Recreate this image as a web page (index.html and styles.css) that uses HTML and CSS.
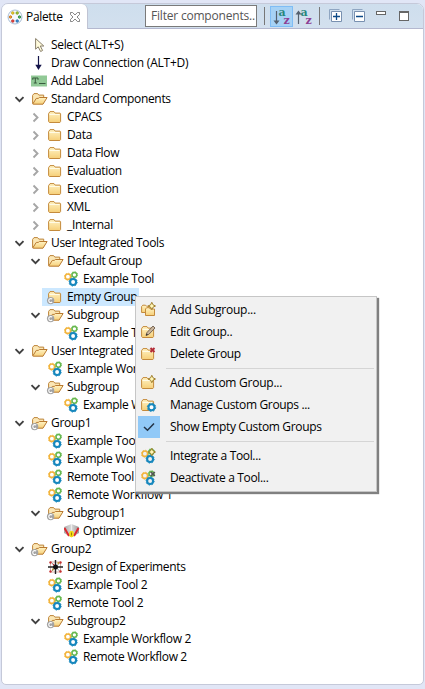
FILE: index.html
```html
<!DOCTYPE html>
<html lang="en">
<head>
<meta charset="utf-8">
<title>Palette</title>
<link rel="stylesheet" href="styles.css">
</head>
<body>
<svg class="defs" aria-hidden="true">
  <defs>
    <linearGradient id="fold" x1="0" y1="0" x2="0" y2="1"><stop offset="0" stop-color="#fff3c4"/><stop offset="1" stop-color="#f6cf78"/></linearGradient>
    <linearGradient id="steel" x1="0" y1="0" x2="1" y2="0"><stop offset="0" stop-color="#aaa"/><stop offset=".5" stop-color="#dcdcdc"/><stop offset="1" stop-color="#999"/></linearGradient>
    <symbol id="down" viewBox="0 0 16 16"><path d="M3.500 6.200l4 4 4-4" fill="none" stroke="#404040" stroke-width="1.900"/></symbol>
    <symbol id="right" viewBox="0 0 16 16"><path d="M5.500 4.500l4 4-4 4" fill="none" stroke="#a6a6a6" stroke-width="1.900"/></symbol>
    <symbol id="closed" viewBox="0 0 16 16"><path d="M.6 12.500V4.600L2 2.600h4l1.200 1.500h4.900l.5.600v7.800l-.7 1H1.400z" fill="url(#fold)" stroke="#c48a3c"/><path d="M1.500 5.500h10" stroke="#fffbe6"/></symbol>
    <symbol id="open" viewBox="0 0 16 16"><path d="M.6 12.600V4.400L2 2.600h3.600l1.200 1.500h4.900v3" fill="#fbe7b5" stroke="#bd853b"/><path d="M.7 13l3.600-5.600h2l1-.9h7.800L11 13.200H1.200z" fill="url(#fold)" stroke="#b97a31"/></symbol>
    <symbol id="mark" viewBox="0 0 16 16" overflow="visible"><circle cx="2.600" cy="11.600" r="3.700" fill="#a3a3a3"/><path d="M4.200 10.200a2 2 0 1 0 0 2.800" fill="none" stroke="#fff" stroke-width="1.100"/></symbol>
    <symbol id="openc" viewBox="0 0 16 16" overflow="visible"><use href="#open"/><use href="#mark"/></symbol>
    <symbol id="closedc" viewBox="0 0 16 16" overflow="visible"><use href="#closed"/><use href="#mark"/></symbol>
    <symbol id="gears" viewBox="0 0 16 16"><g fill="none"><circle cx="3.900" cy="5.700" r="2.700" stroke="#f2b43c" stroke-width="1.600"/><circle cx="3.900" cy="5.700" r="3.500" stroke="#f2b43c" stroke-dasharray="1.100 1.650"/><circle cx="10.400" cy="3.800" r="2.400" stroke="#67b84f" stroke-width="1.500"/><circle cx="10.400" cy="3.800" r="3.200" stroke="#67b84f" stroke-dasharray="1 1.510"/><circle cx="9.100" cy="11" r="3" stroke="#1687bd" stroke-width="2.100"/><circle cx="9.100" cy="11" r="4.100" stroke="#1687bd" stroke-dasharray="1.300 1.920"/></g></symbol>
    <symbol id="cursor" viewBox="0 0 16 16"><path d="M3.600 1.500v10.700l2.600-2.400 2.400 4.700 2-1-2.300-4.500h3.500z" fill="#fffbdc" stroke="#8a806c"/></symbol>
    <symbol id="arrow" viewBox="0 0 16 16"><path d="M6.500 1v10" stroke="#15154a" stroke-width="1.200"/><path d="M3.300 9.700h6.400L6.500 15z" fill="#15154a"/></symbol>
    <symbol id="label" viewBox="0 0 16 16" overflow="visible"><path d="M-1 2.500h16v11H-1z" fill="#91c996"/><path d="M.5 5h5.500v1.800M3.300 5v5M1.800 10h3M.8 5v1.800M7 10.500h6.500" fill="none" stroke="#385b3d"/></symbol>
    <symbol id="opt" viewBox="0 0 16 16"><path d="M0 4l7.500-3L15 4v6l-7.500 4.500L0 10z" fill="url(#steel)"/><path d="M7.500 1v8" stroke="#f2f2f2" stroke-width=".8"/><path d="M.5 5l4.500 8M14.500 5L10 13" fill="none" stroke="#dd2930" stroke-width="2"/><ellipse cx="7.500" cy="11" rx="2.300" ry="3.200" fill="#f4dc12"/><path d="M7.500 9.500v3" stroke="#9b8308"/></symbol>
    <symbol id="doe" viewBox="0 0 16 16"><path d="M2.500 3h10v10h-10z" fill="none" stroke="#c9a08f" stroke-width=".8"/><path d="M4 4l7.500 8M11.500 4L4 12" stroke="#777" stroke-width=".8"/><path d="M7.500 1v14M0 8h15" stroke="#222" stroke-width="1.400"/><circle cx="7.500" cy="8" r="2.500" fill="#111"/><g fill="#c53131"><circle cx="2.500" cy="3.500" r="1.200"/><circle cx="12.500" cy="3.500" r="1.200"/><circle cx="2.500" cy="12.500" r="1.200"/><circle cx="12.500" cy="12.500" r="1.200"/><circle cx="5.500" cy="5.500" r=".8"/></g><path d="M4 9.500h1.500v2H4zM9.500 3H11v2H9.500z" fill="#c09a36"/></symbol>
    <symbol id="star" viewBox="0 0 16 16"><path d="M10.800.300l1.200 2.500 2.500 1.200L12 5.200l-1.200 2.500-1.200-2.500L7.100 4l2.500-1.200z" fill="#fff7b8" stroke="#96721d" stroke-width=".9"/></symbol>
    <symbol id="addsub" viewBox="0 0 16 16"><path d="M.6 10.500V4.500l1.200-1.300h2.700l1 1H9v6.300z" fill="url(#fold)" stroke="#c48a3c"/><path d="M4.500 13.500V7l1.200-1.300h2.600l1 1.300h4.200v6.500z" fill="url(#fold)" stroke="#c48a3c"/><use href="#star"/></symbol>
    <symbol id="edit" viewBox="0 0 16 16"><use href="#closed"/><path d="M5 11.500l1-3L12 2l2 2-6.200 6.400z" fill="#c9b59c" stroke="#6c5b4c" stroke-width=".9"/><path d="M5 11.500l.7-2 1.200 1.200z" fill="#222"/></symbol>
    <symbol id="del" viewBox="0 0 16 16"><use href="#closed"/><path d="M9.500 2l4 4m0-4l-4 4" stroke="#b32b37" stroke-width="1.900"/></symbol>
    <symbol id="addgrp" viewBox="0 0 16 16"><use href="#closed"/><use href="#star"/></symbol>
    <symbol id="manage" viewBox="0 0 16 16"><use href="#closed"/><circle cx="10.500" cy="10.300" r="3" fill="#fff" stroke="#1687bd" stroke-width="2"/><circle cx="10.500" cy="10.300" r="4.200" fill="none" stroke="#1687bd" stroke-dasharray="1.600 1.700"/></symbol>
    <symbol id="check" viewBox="0 0 16 16"><path d="M3 8l3.500 3.300L13 4.500" fill="none" stroke="#243447" stroke-width="1.500"/></symbol>
    <symbol id="integrate" viewBox="0 0 16 16"><use href="#gears"/><use href="#star"/></symbol>
    <symbol id="deact" viewBox="0 0 16 16"><use href="#gears"/><path d="M9.800 2l4 4m0-4l-4 4" stroke="#555" stroke-width="1.700"/></symbol>
  </defs>
</svg>
<main class="panel">
  <header class="bar">
    <div class="tab">
      <svg class="ico" viewBox="0 0 16 16"><circle cx="8" cy="8" r="7" fill="#f4f8fd" stroke="#a9bdd4"/><g stroke-width=".9"><circle cx="5.800" cy="4" r="1.200" fill="#ffe23a" stroke="#b79b13"/><circle cx="10.200" cy="4" r="1.200" fill="#b9d839" stroke="#6f9620"/><circle cx="3.500" cy="8" r="1.200" fill="#f9a63a" stroke="#c56d15"/><circle cx="12.500" cy="8" r="1.200" fill="#55b567" stroke="#238540"/><circle cx="5.800" cy="12" r="1.200" fill="#ef5a50" stroke="#bd2727"/><circle cx="10.200" cy="12" r="1.200" fill="#4b9de0" stroke="#1f66ac"/></g></svg>
      <span class="title">Palette</span>
      <svg class="close" viewBox="0 0 11 11"><path d="M.5.500h2.300L5.500 3.300 8.200.500h2.300v2.300L7.700 5.500l2.800 2.700v2.300H8.200L5.500 7.700l-2.700 2.800H.500V8.200l2.800-2.700L.500 2.800z" fill="#fff" stroke="#6b6b6b" stroke-width=".9"/></svg>
    </div>
    <div class="tools">
      <div class="filter">Filter components..</div>
      <i class="vsep"></i>
      <div class="sort on"><svg viewBox="0 0 21 19"><path d="M5.500 4v11" stroke="#55606e" stroke-width="1.200"/><path d="M2.500 13.500h6l-3 4z" fill="#55606e"/><text x="7.500" y="9" class="a">a</text><text x="12.500" y="17" class="z">z</text></svg></div>
      <div class="sort"><svg viewBox="0 0 21 19"><path d="M4.500 5v12" stroke="#55606e" stroke-width="1.200"/><path d="M1.500 7.500h6l-3-4z" fill="#55606e"/><text x="6.500" y="9" class="a">a</text><text x="11.500" y="17" class="z">z</text></svg></div>
      <i class="vsep second"></i>
      <svg class="box" viewBox="0 0 14 14"><path d="M.5 10.500V.500h10" fill="none" stroke="#8fa6c2"/><path d="M2.500 2.500h10v10h-10z" fill="#fff" stroke="#7890b0"/><path d="M4 7.500h7M7.500 4v7" stroke="#0d4a88" stroke-width="1.300"/></svg>
      <svg class="box" viewBox="0 0 14 14"><path d="M.5 10.500V.500h10" fill="none" stroke="#8fa6c2"/><path d="M2.500 2.500h10v10h-10z" fill="#fff" stroke="#7890b0"/><path d="M4 7.500h7" stroke="#0d4a88" stroke-width="1.300"/></svg>
      <i class="min"></i>
      <i class="max"></i>
    </div>
  </header>
  <div class="tree">
    <div class="row"><i class="tw"></i><svg class="ico"><use href="#cursor"/></svg><span>Select (ALT+S)</span></div>
    <div class="row"><i class="tw"></i><svg class="ico"><use href="#arrow"/></svg><span class="wide">Draw Connection (ALT+D)</span></div>
    <div class="row"><i class="tw"></i><svg class="ico"><use href="#label"/></svg><span>Add Label</span></div>
    <div class="row"><svg class="tw"><use href="#down"/></svg><svg class="ico"><use href="#open"/></svg><span>Standard Components</span></div>
    <div class="row d1"><svg class="tw"><use href="#right"/></svg><svg class="ico"><use href="#closed"/></svg><span>CPACS</span></div>
    <div class="row d1"><svg class="tw"><use href="#right"/></svg><svg class="ico"><use href="#closed"/></svg><span>Data</span></div>
    <div class="row d1"><svg class="tw"><use href="#right"/></svg><svg class="ico"><use href="#closed"/></svg><span>Data Flow</span></div>
    <div class="row d1"><svg class="tw"><use href="#right"/></svg><svg class="ico"><use href="#closed"/></svg><span>Evaluation</span></div>
    <div class="row d1"><svg class="tw"><use href="#right"/></svg><svg class="ico"><use href="#closed"/></svg><span>Execution</span></div>
    <div class="row d1"><svg class="tw"><use href="#right"/></svg><svg class="ico"><use href="#closed"/></svg><span>XML</span></div>
    <div class="row d1"><svg class="tw"><use href="#right"/></svg><svg class="ico"><use href="#closed"/></svg><span>_Internal</span></div>
    <div class="row"><svg class="tw"><use href="#down"/></svg><svg class="ico"><use href="#open"/></svg><span>User Integrated Tools</span></div>
    <div class="row d1"><svg class="tw"><use href="#down"/></svg><svg class="ico"><use href="#open"/></svg><span>Default Group</span></div>
    <div class="row d2"><i class="tw"></i><svg class="ico"><use href="#gears"/></svg><span>Example Tool</span></div>
    <div class="row d1 sel"><i class="tw"></i><svg class="ico"><use href="#closedc"/></svg><span>Empty Group</span></div>
    <div class="row d1"><svg class="tw"><use href="#down"/></svg><svg class="ico"><use href="#openc"/></svg><span>Subgroup</span></div>
    <div class="row d2"><i class="tw"></i><svg class="ico"><use href="#gears"/></svg><span>Example Tool</span></div>
    <div class="row"><svg class="tw"><use href="#down"/></svg><svg class="ico"><use href="#open"/></svg><span>User Integrated Workflows</span></div>
    <div class="row d1"><i class="tw"></i><svg class="ico"><use href="#gears"/></svg><span>Example Workflow</span></div>
    <div class="row d1"><svg class="tw"><use href="#down"/></svg><svg class="ico"><use href="#openc"/></svg><span>Subgroup</span></div>
    <div class="row d2"><i class="tw"></i><svg class="ico"><use href="#gears"/></svg><span>Example Workflow</span></div>
    <div class="row"><svg class="tw"><use href="#down"/></svg><svg class="ico"><use href="#openc"/></svg><span>Group1</span></div>
    <div class="row d1"><i class="tw"></i><svg class="ico"><use href="#gears"/></svg><span>Example Tool 1</span></div>
    <div class="row d1"><i class="tw"></i><svg class="ico"><use href="#gears"/></svg><span>Example Workflow 1</span></div>
    <div class="row d1"><i class="tw"></i><svg class="ico"><use href="#gears"/></svg><span>Remote Tool 1</span></div>
    <div class="row d1"><i class="tw"></i><svg class="ico"><use href="#gears"/></svg><span class="wide">Remote Workflow 1</span></div>
    <div class="row d1"><svg class="tw"><use href="#down"/></svg><svg class="ico"><use href="#openc"/></svg><span>Subgroup1</span></div>
    <div class="row d2"><i class="tw"></i><svg class="ico"><use href="#opt"/></svg><span>Optimizer</span></div>
    <div class="row"><svg class="tw"><use href="#down"/></svg><svg class="ico"><use href="#openc"/></svg><span>Group2</span></div>
    <div class="row d1"><i class="tw"></i><svg class="ico"><use href="#doe"/></svg><span>Design of Experiments</span></div>
    <div class="row d1"><i class="tw"></i><svg class="ico"><use href="#gears"/></svg><span>Example Tool 2</span></div>
    <div class="row d1"><i class="tw"></i><svg class="ico"><use href="#gears"/></svg><span>Remote Tool 2</span></div>
    <div class="row d1"><svg class="tw"><use href="#down"/></svg><svg class="ico"><use href="#openc"/></svg><span>Subgroup2</span></div>
    <div class="row d2"><i class="tw"></i><svg class="ico"><use href="#gears"/></svg><span>Example Workflow 2</span></div>
    <div class="row d2"><i class="tw"></i><svg class="ico"><use href="#gears"/></svg><span>Remote Workflow 2</span></div>
  </div>
</main>
<div class="menu">
  <div class="item"><b class="slot"><svg class="ico"><use href="#addsub"/></svg></b><span class="wide">Add Subgroup...</span></div>
  <div class="item"><b class="slot"><svg class="ico"><use href="#edit"/></svg></b><span>Edit Group..</span></div>
  <div class="item"><b class="slot"><svg class="ico"><use href="#del"/></svg></b><span>Delete Group</span></div>
  <hr>
  <div class="item"><b class="slot"><svg class="ico"><use href="#addgrp"/></svg></b><span class="wide">Add Custom Group...</span></div>
  <div class="item"><b class="slot"><svg class="ico"><use href="#manage"/></svg></b><span>Manage Custom Groups ...</span></div>
  <div class="item"><b class="slot checked"><svg class="ico"><use href="#check"/></svg></b><span>Show Empty Custom Groups</span></div>
  <hr>
  <div class="item"><b class="slot"><svg class="ico"><use href="#integrate"/></svg></b><span>Integrate a Tool...</span></div>
  <div class="item"><b class="slot"><svg class="ico"><use href="#deact"/></svg></b><span>Deactivate a Tool...</span></div>
</div>
</body>
</html>
```
FILE: styles.css
```css
* { box-sizing: border-box; }
body {
  margin: 0;
  height: 689px;
  padding: 3px 1px 4px;
  overflow: hidden;
  background: #e1e6f6;
  color: #000;
  font: 12px/18px "Open Sans", "Noto Sans", sans-serif;
  letter-spacing: -0.34px;
  white-space: nowrap;
}
.defs { position: absolute; width: 0; height: 0; }
.panel {
  height: 682px;
  background: #fff;
  border: 1px solid #c5c9d9;
  border-radius: 7px 7px 5px 5px;
  overflow: hidden;
}
.bar {
  display: flex;
  height: 25px;
  background: linear-gradient(#cedeed, #d3e0ee);
}
.tab {
  display: flex;
  align-items: center;
  flex: none;
  width: 86px;
  padding-left: 5px;
  background: #fff;
  border-right: 1px solid #c0c4d4;
  border-radius: 0 6px 0 0;
}
.title { flex: none; margin-left: 3px; width: 44px; }
.close { flex: none; width: 10px; height: 10px; }
.tools {
  display: flex;
  align-items: center;
  flex: 1;
  border-bottom: 1px solid #b4b8cf;
  padding-left: 57px;
}
.tools > * { flex: none; }
.filter {
  width: 112px;
  height: 22px;
  padding-left: 5px;
  line-height: 20px;
  letter-spacing: -0.2px;
  background: #fff;
  border: 1px solid #7a7a7a;
  color: #555;
}
.vsep { width: 1px; height: 18px; margin: 0 5px 0 7px; background: #777; }
.vsep.second { margin: 0 9px 0 3px; }
.sort { width: 23px; height: 21px; border: 1px solid transparent; }
.sort.on { background: #a6d2f5; border-color: #7fbdf5; }
.sort svg { display: block; width: 21px; height: 19px; overflow: visible; }
.a, .z { font: bold 11px/11px "DejaVu Serif", serif; letter-spacing: 0; }
.a { fill: #27877c; }
.z { fill: #8e3f94; }
.box { width: 14px; height: 14px; margin-right: 9px; }
.min { width: 10px; height: 4px; margin: -7px 13px 0 1px; border: 1px solid #666; background: #fff; }
.max { width: 10px; height: 10px; border: 1px solid #666; border-top-width: 2px; background: #fff; }
.tree { padding-top: 7px; }
.row { display: flex; align-items: center; height: 18px; padding-left: 10px; }
.d1 { padding-left: 26px; }
.d2 { padding-left: 42px; }
.tw { width: 16px; height: 16px; margin-right: 4px; flex: none; }
.ico { width: 16px; height: 16px; flex: none; overflow: visible; }
.row span { margin-left: 3px; }
.wide { letter-spacing: -0.24px; }
.sel { background: linear-gradient(#cce8ff, #cce8ff) 40px 0 / 97px 18px no-repeat; }
.menu {
  position: absolute;
  left: 135px;
  top: 296px;
  width: 242px;
  height: 196px;
  padding: 2px;
  background: #f1f1f1;
  border: 1px solid #c6c6c6;
  box-shadow: 2px 2px 1px 0 #808080;
}
.item { display: flex; align-items: center; height: 22px; }
.item span { margin-left: 10px; }
.slot { display: flex; align-items: center; justify-content: center; width: 22px; height: 22px; }
.checked { background: #91c9f7; }
hr { height: 1px; margin: 3px 0 3px 28px; border: 0; background: #d5d5d5; }
```
